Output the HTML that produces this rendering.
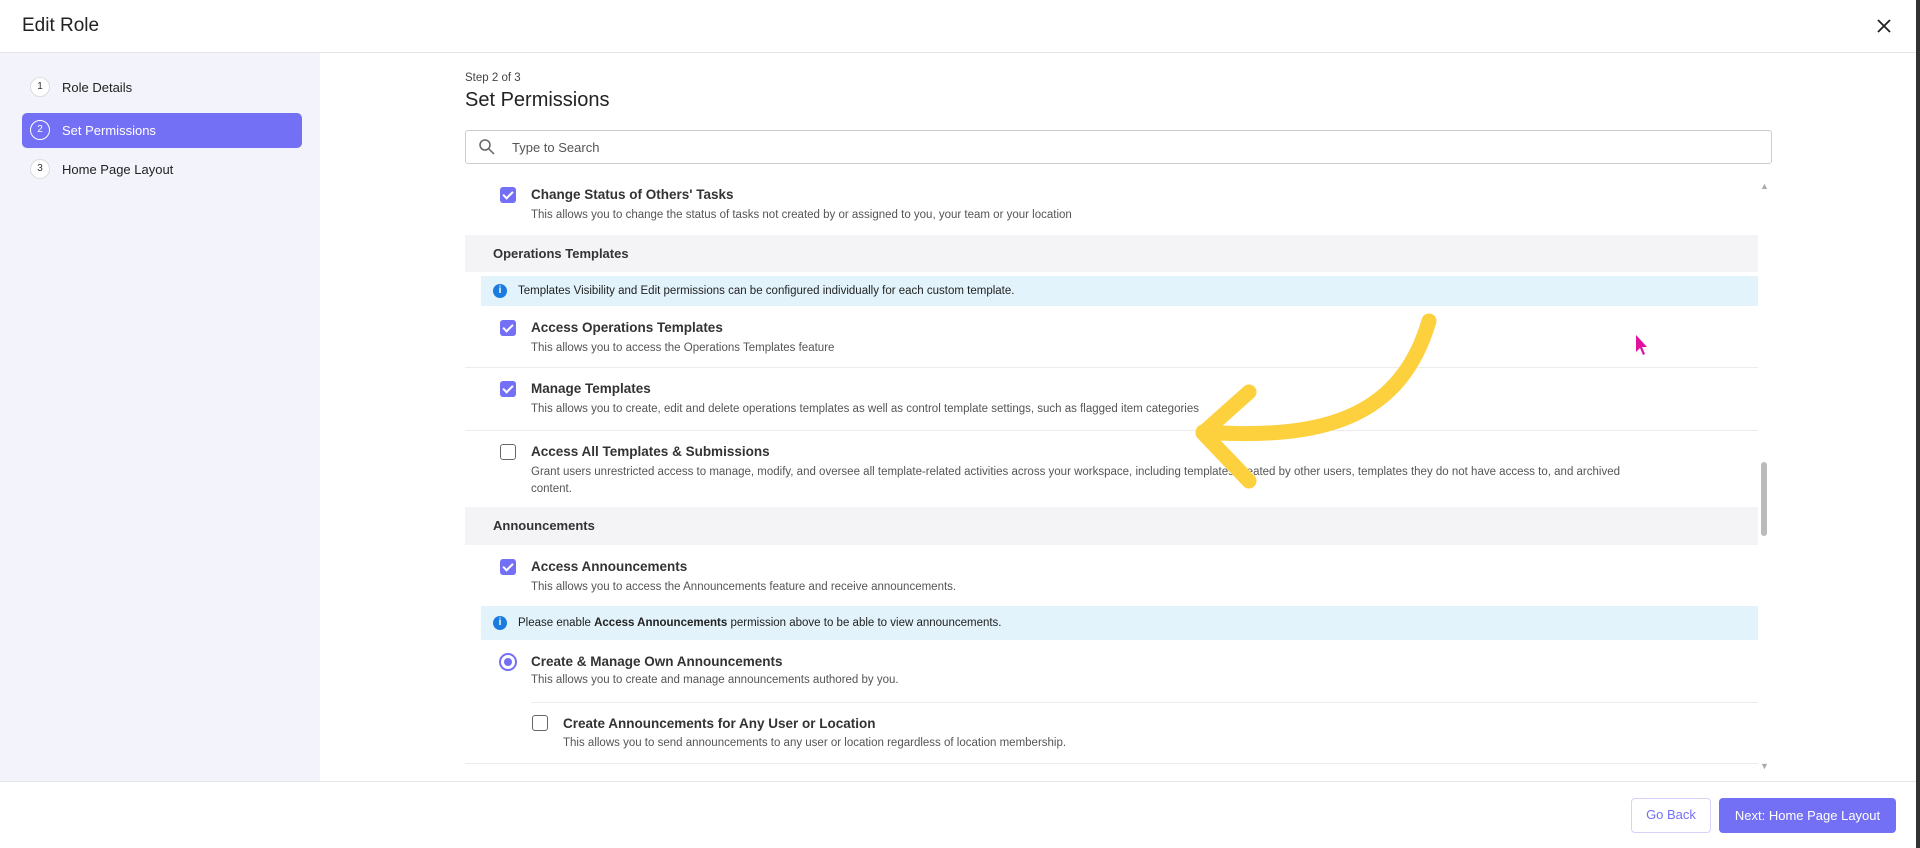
<!DOCTYPE html>
<html><head><meta charset="utf-8"><style>
*{box-sizing:border-box;margin:0;padding:0}
body{width:1920px;height:848px;overflow:hidden;background:#fff;font-family:"Liberation Sans",sans-serif;color:#222;position:relative}
.a{position:absolute}
.t{font-size:13.5px;font-weight:bold;color:#333}
.d{font-size:11.5px;color:#555}
.cb{width:16px;height:16px;border-radius:3px;background:#7470f5}
.cb:after{content:"";position:absolute;left:5px;top:2px;width:4px;height:8px;border:solid #fff;border-width:0 2px 2px 0;transform:rotate(45deg)}
.ub{width:16px;height:16px;border-radius:3px;border:1.5px solid #666;background:#fff}
.hr{height:1px;background:#ececf0;left:465px;width:1293px}
.sec{left:465px;width:1293px;background:#f4f4f7;font-size:13px;font-weight:bold;color:#333;padding-left:28px}
.ban{left:481px;width:1277px;background:#e2f3fb;font-size:11.5px;color:#222;padding-left:37px}
.ban i{position:absolute;left:12px;top:50%;margin-top:-7px;width:14px;height:14px;border-radius:50%;background:#1b7ce0;color:#fff;font-size:10px;font-style:normal;font-weight:bold;text-align:center;line-height:14px}
.num{width:20px;height:20px;border-radius:50%;border:1px solid #ddd;background:#fff;font-size:10px;text-align:center;line-height:18px;color:#333}
.st{font-size:13px;color:#222}
</style></head><body>
<div class="a" style="left:0;top:0;width:1920px;height:53px;border-bottom:1px solid #e5e5e5"></div>
<div class="a" style="left:22px;top:15px;font-size:19px;color:#222">Edit Role</div>
<svg class="a" style="left:1877px;top:19px" width="14" height="14"><path d="M1 1L13 13M13 1L1 13" stroke="#222" stroke-width="1.8"/></svg>
<div class="a" style="left:0;top:53px;width:320px;height:728px;background:#f3f3fb"></div>
<div class="a num" style="left:30px;top:77px">1</div><div class="a st" style="left:62px;top:80px">Role Details</div>
<div class="a" style="left:22px;top:113px;width:280px;height:35px;background:#7470f5;border-radius:5px"></div>
<div class="a num" style="left:30px;top:120px;background:transparent;border:1.5px solid #fff;color:#fff">2</div><div class="a st" style="left:62px;top:123px;color:#fff">Set Permissions</div>
<div class="a num" style="left:30px;top:159px">3</div><div class="a st" style="left:62px;top:162px">Home Page Layout</div>
<div class="a" style="left:465px;top:72px;font-size:11.5px;color:#444">Step 2 of 3</div>
<div class="a" style="left:465px;top:89px;font-size:20px;color:#222">Set Permissions</div>
<div class="a" style="left:465px;top:130px;width:1307px;height:34px;border:1px solid #ccc;border-radius:3px"></div>
<svg class="a" style="left:478px;top:138px" width="18" height="18"><circle cx="7" cy="7" r="5" fill="none" stroke="#666" stroke-width="1.5"/><line x1="11" y1="11" x2="16" y2="16" stroke="#666" stroke-width="1.5"/></svg>
<div class="a" style="left:512px;top:140px;font-size:13px;color:#555">Type to Search</div>
<div class="a cb" style="left:500px;top:187px"></div>
<div class="a t" style="left:531px;top:187px">Change Status of Others' Tasks</div>
<div class="a d" style="left:531px;top:209px">This allows you to change the status of tasks not created by or assigned to you, your team or your location</div>
<div class="a sec" style="top:235px;height:37px;line-height:37px">Operations Templates</div>
<div class="a ban" style="top:276px;height:30px;line-height:30px"><i>i</i>Templates Visibility and Edit permissions can be configured individually for each custom template.</div>
<div class="a cb" style="left:500px;top:320px"></div>
<div class="a t" style="left:531px;top:320px">Access Operations Templates</div>
<div class="a d" style="left:531px;top:342px">This allows you to access the Operations Templates feature</div>
<div class="a hr" style="top:367px"></div>
<div class="a cb" style="left:500px;top:381px"></div>
<div class="a t" style="left:531px;top:381px">Manage Templates</div>
<div class="a d" style="left:531px;top:403px">This allows you to create, edit and delete operations templates as well as control template settings, such as flagged item categories</div>
<div class="a hr" style="top:430px"></div>
<div class="a ub" style="left:500px;top:444px"></div>
<div class="a t" style="left:531px;top:444px">Access All Templates &amp; Submissions</div>
<div class="a d" style="left:531px;top:464px;width:1100px;line-height:17px">Grant users unrestricted access to manage, modify, and oversee all template-related activities across your workspace, including templates created by other users, templates they do not have access to, and archived content.</div>
<div class="a sec" style="top:507px;height:38px;line-height:38px">Announcements</div>
<div class="a cb" style="left:500px;top:559px"></div>
<div class="a t" style="left:531px;top:559px">Access Announcements</div>
<div class="a d" style="left:531px;top:581px">This allows you to access the Announcements feature and receive announcements.</div>
<div class="a ban" style="top:606px;height:34px;line-height:34px"><i>i</i>Please enable <b>Access Announcements</b> permission above to be able to view announcements.</div>
<div class="a" style="left:499px;top:653px;width:18px;height:18px;border-radius:50%;border:2px solid #7470f5"><div style="margin:3px;width:8px;height:8px;border-radius:50%;background:#7470f5"></div></div>
<div class="a t" style="left:531px;top:654px">Create &amp; Manage Own Announcements</div>
<div class="a d" style="left:531px;top:674px">This allows you to create and manage announcements authored by you.</div>
<div class="a hr" style="top:702px;left:531px;width:1227px"></div>
<div class="a ub" style="left:532px;top:715px"></div>
<div class="a t" style="left:563px;top:716px">Create Announcements for Any User or Location</div>
<div class="a d" style="left:563px;top:737px">This allows you to send announcements to any user or location regardless of location membership.</div>
<div class="a hr" style="top:763px"></div>
<div class="a" style="left:1760px;top:181px;font-size:9px;color:#aaa">▲</div>
<div class="a" style="left:1761px;top:462px;width:6px;height:74px;background:#bbb;border-radius:3px"></div>
<div class="a" style="left:1760px;top:761px;font-size:9px;color:#aaa">▼</div>
<div class="a" style="left:0;top:781px;width:1920px;height:1px;background:#e5e5e5"></div>
<div class="a" style="left:1631px;top:798px;width:80px;height:35px;border:1.5px solid #d4d3fb;border-radius:4px;color:#7470f5;font-size:13px;text-align:center;line-height:32px">Go Back</div>
<div class="a" style="left:1719px;top:798px;width:177px;height:35px;background:#7470f5;border-radius:4px;color:#fff;font-size:13px;text-align:center;line-height:35px">Next: Home Page Layout</div>
<div class="a" style="left:1916px;top:0;width:4px;height:848px;background:#333"></div>
<svg class="a" style="left:0;top:0" width="1920" height="848"><path d="M1429 321 C1400 420 1320 440 1203 432 M1249 392 L1203 433 L1249 481" fill="none" stroke="#fdd03e" stroke-width="15" stroke-linecap="round" stroke-linejoin="round"/>
<path d="M1636 335 L1636 352 L1640 348 L1643 355 L1645 354 L1642 347 L1647 347 Z" fill="#e010a0"/></svg>
</body></html>
